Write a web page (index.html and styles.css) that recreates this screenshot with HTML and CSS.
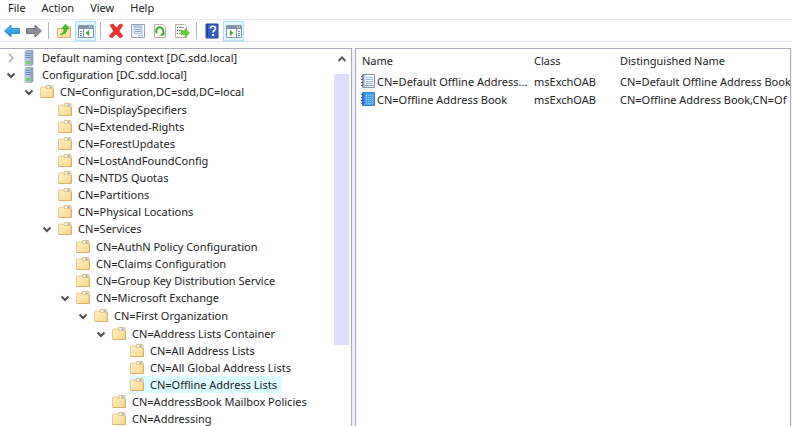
FILE: index.html
```
<!DOCTYPE html>
<html lang="en">
<head>
<meta charset="utf-8">
<title>ADSI Edit</title>
<link rel="stylesheet" href="styles.css">
</head>
<body>
<svg class="defs" aria-hidden="true">
  <defs>
    <linearGradient id="gold" x1="0" y1="0" x2="1" y2="1"><stop offset="0" stop-color="#fff0c2"/><stop offset="1" stop-color="#f7d98e"/></linearGradient>
    <linearGradient id="blue" x1="0" y1="0" x2="0" y2="1"><stop offset="0" stop-color="#5cc5fa"/><stop offset="1" stop-color="#1687dc"/></linearGradient>
  </defs>
  <symbol id="folder" viewBox="0 0 16 16">
    <path d="M7 2.500q0-1 1-1h5q1 0 1 1V5H7z" fill="#f3dda2" stroke="#d9b676" stroke-width=".8"/>
    <path d="M8.500 2.500H13V4H8.500z" fill="#fff"/><path d="M10.500 2.500h2v1.500h-2z" fill="#5aa7e0"/>
    <path d="M1.500 4q0-1 1-1h3.500l1.500 1.500h6.500v9H1.500z" fill="url(#gold)" stroke="#e3c180" stroke-width=".8"/>
    <path d="M2 13.500h12.500V5" fill="none" stroke="#d8b06a"/>
  </symbol>
  <symbol id="server" viewBox="0 0 16 16">
    <path d="M4 1.500L6 .5h6v14l-1.500 1H4z" fill="#93a6bc" stroke="#8493a8" stroke-width=".6"/>
    <path d="M4 1.500h5.500v14H4z" fill="#b3cae4"/>
    <path d="M4.500 3.500h5M4.500 5.500h5M4.500 7.500h5" stroke="#6289bb"/>
    <path d="M5 11h4v3H5z" fill="#6fd45a"/>
  </symbol>
  <symbol id="down" viewBox="0 0 12 12"><path d="M2.500 4.500L6 8l3.500-3.500" fill="none" stroke="#50504c" stroke-width="2"/></symbol>
  <symbol id="right" viewBox="0 0 12 12"><path d="M4 2l4 4-4 4" fill="none" stroke="#aaa" stroke-width="1.500"/></symbol>
</svg>

<nav class="menubar" aria-label="Menu">
  <button type="button">File</button><button type="button">Action</button><button type="button">View</button><button type="button">Help</button>
</nav>

<div class="toolbar" role="toolbar" aria-label="Tools">
  <button type="button" class="tool" aria-label="Back"><svg viewBox="0 0 16 16"><path d="M.5 8L7 2v3.500h8.500v5H7V14z" fill="url(#blue)" stroke="#348fc9"/></svg></button>
  <button type="button" class="tool" aria-label="Forward"><svg viewBox="0 0 16 16"><path d="M15.500 8L9 2v3.500H.5v5H9V14z" fill="#8e8e96" stroke="#707078"/></svg></button>
  <span class="divider"></span>
  <button type="button" class="tool" aria-label="Up one level"><svg viewBox="0 0 16 16"><path d="M1.500 5.500h7l1-2h5v11h-13z" fill="url(#gold)" stroke="#d5b878"/><path d="M4 11.500c3-1 4-3 4-5.500H5.500L9.500 1l4 5H11c0 4-3 6-7 5.500z" fill="#46bd2d" stroke="#389f29" stroke-width=".5"/></svg></button>
  <button type="button" class="tool active" aria-label="Show console tree"><svg viewBox="0 0 16 16"><path d="M.5 2.500h15v12H.5z" fill="#fff" stroke="#8995a9"/><path d="M1 3h14v3H1z" fill="#8392ab"/><path d="M11 4h1M13 4h1" stroke="#fff"/><path d="M5.500 6v8" stroke="#8995a9"/><path d="M2 8.500h2M2 10.500h2M2 12.500h2" stroke="#5980b8"/><path d="M11 7v6l-3.500-3z" fill="#37ad24"/></svg></button>
  <span class="divider"></span>
  <button type="button" class="tool" aria-label="Delete"><svg viewBox="0 0 16 16"><path d="M2 2l3-1 3.500 4L12 1l3 1-4 6 4 5-3 2-4-4-4 4-3-2 4.500-5z" fill="#ee322c" stroke="#cb2923" stroke-width=".6"/></svg></button>
  <button type="button" class="tool" aria-label="Properties"><svg viewBox="0 0 16 16"><path d="M1.500 1.500h13v13h-13z" fill="#f4f7fc" stroke="#97a1b8"/><path d="M4 4.500h8v6H4z" fill="#e0edf8" stroke="#91acc8" stroke-width=".7"/><path d="M3 3h9M5 6.500h6M5 8.500h6M8 12.500h2M11 12.500h2" stroke="#83a6ca"/></svg></button>
  <button type="button" class="tool" aria-label="Refresh"><svg viewBox="0 0 16 16"><path d="M2.500 1.500h9l2 2v11h-11z" fill="#fffef6" stroke="#bbb59f"/><path d="M5 10a3.500 3.500 0 1 1 6-1" fill="none" stroke="#3cae2c" stroke-width="2"/><path d="M12.500 7.500v5h-5z" fill="#3cae2c"/></svg></button>
  <button type="button" class="tool" aria-label="Export list"><svg viewBox="0 0 16 16"><path d="M1.500 1.500h9l2 2v11h-11z" fill="#fffef6" stroke="#bbb59f"/><path d="M3 4.500h1M3 7.500h1M3 10.500h1" stroke="#555"/><path d="M5 4.500h5M5 7.500h4M5 10.500h4" stroke="#8ca1b8"/><path d="M7 8h4V5.500L15.500 10 11 14v-2.500H7z" fill="#60d12a" stroke="#43ac25" stroke-width=".5"/></svg></button>
  <span class="divider"></span>
  <button type="button" class="tool" aria-label="Help"><svg viewBox="0 0 16 16"><path d="M2 1h12v14H2z" fill="#365fc7" stroke="#24459b"/><path d="M3.500 1v14" stroke="#233f91"/><path d="M6.500 5.500c0-3 5-3 5 0 0 2-2.500 2-2.500 4" fill="none" stroke="#fff" stroke-width="1.700"/><path d="M8 11h2v2H8z" fill="#fff"/></svg></button>
  <button type="button" class="tool active" aria-label="Show action pane"><svg viewBox="0 0 16 16"><path d="M.5 2.500h15v12H.5z" fill="#fff" stroke="#8995a9"/><path d="M1 3h14v3H1z" fill="#8392ab"/><path d="M11 4h1M13 4h1" stroke="#fff"/><path d="M10.500 6v8" stroke="#8995a9"/><path d="M12 8.500h2M12 10.500h2M12 12.500h2" stroke="#5980b8"/><path d="M4 7v6l3.500-3z" fill="#37ad24"/></svg></button>
</div>

<main class="panes">
  <section class="pane tree-pane" aria-label="Console tree">
    <ul class="tree">
      <li><div class="node"><button type="button" class="toggle" aria-label="Expand"><svg><use href="#right"/></svg></button><svg class="icon"><use href="#server"/></svg><span>Default naming context [DC.sdd.local]</span></div></li>
      <li><div class="node"><button type="button" class="toggle" aria-label="Collapse"><svg><use href="#down"/></svg></button><svg class="icon"><use href="#server"/></svg><span>Configuration [DC.sdd.local]</span></div>
        <ul class="branch">
          <li><div class="node"><button type="button" class="toggle" aria-label="Collapse"><svg><use href="#down"/></svg></button><svg class="icon"><use href="#folder"/></svg><span>CN=Configuration,DC=sdd,DC=local</span></div>
            <ul class="branch">
              <li><div class="node leaf"><svg class="icon"><use href="#folder"/></svg><span>CN=DisplaySpecifiers</span></div></li>
              <li><div class="node leaf"><svg class="icon"><use href="#folder"/></svg><span>CN=Extended-Rights</span></div></li>
              <li><div class="node leaf"><svg class="icon"><use href="#folder"/></svg><span>CN=ForestUpdates</span></div></li>
              <li><div class="node leaf"><svg class="icon"><use href="#folder"/></svg><span>CN=LostAndFoundConfig</span></div></li>
              <li><div class="node leaf"><svg class="icon"><use href="#folder"/></svg><span>CN=NTDS Quotas</span></div></li>
              <li><div class="node leaf"><svg class="icon"><use href="#folder"/></svg><span>CN=Partitions</span></div></li>
              <li><div class="node leaf"><svg class="icon"><use href="#folder"/></svg><span>CN=Physical Locations</span></div></li>
              <li><div class="node"><button type="button" class="toggle" aria-label="Collapse"><svg><use href="#down"/></svg></button><svg class="icon"><use href="#folder"/></svg><span>CN=Services</span></div>
                <ul class="branch">
                  <li><div class="node leaf"><svg class="icon"><use href="#folder"/></svg><span>CN=AuthN Policy Configuration</span></div></li>
                  <li><div class="node leaf"><svg class="icon"><use href="#folder"/></svg><span>CN=Claims Configuration</span></div></li>
                  <li><div class="node leaf"><svg class="icon"><use href="#folder"/></svg><span>CN=Group Key Distribution Service</span></div></li>
                  <li><div class="node"><button type="button" class="toggle" aria-label="Collapse"><svg><use href="#down"/></svg></button><svg class="icon"><use href="#folder"/></svg><span>CN=Microsoft Exchange</span></div>
                    <ul class="branch">
                      <li><div class="node"><button type="button" class="toggle" aria-label="Collapse"><svg><use href="#down"/></svg></button><svg class="icon"><use href="#folder"/></svg><span>CN=First Organization</span></div>
                        <ul class="branch">
                          <li><div class="node"><button type="button" class="toggle" aria-label="Collapse"><svg><use href="#down"/></svg></button><svg class="icon"><use href="#folder"/></svg><span>CN=Address Lists Container</span></div>
                            <ul class="branch last">
                              <li><div class="node leaf"><svg class="icon"><use href="#folder"/></svg><span>CN=All Address Lists</span></div></li>
                              <li><div class="node leaf"><svg class="icon"><use href="#folder"/></svg><span>CN=All Global Address Lists</span></div></li>
                              <li><div class="node leaf selected"><svg class="icon"><use href="#folder"/></svg><span>CN=Offline Address Lists</span></div></li>
                            </ul>
                          </li>
                          <li><div class="node leaf"><svg class="icon"><use href="#folder"/></svg><span>CN=AddressBook Mailbox Policies</span></div></li>
                          <li><div class="node leaf"><svg class="icon"><use href="#folder"/></svg><span>CN=Addressing</span></div></li>
                        </ul>
                      </li>
                    </ul>
                  </li>
                </ul>
              </li>
            </ul>
          </li>
        </ul>
      </li>
    </ul>
    <div class="scrollbar">
      <button type="button" class="scroll-up" aria-label="Scroll up"><svg viewBox="0 0 12 12"><path d="M2.500 8L6 4.500 9.500 8" fill="none" stroke="#5c5c4c" stroke-width="2"/></svg></button>
      <div class="thumb"></div>
    </div>
  </section>
  <section class="pane list-pane" aria-label="Objects">
    <table class="list">
      <colgroup><col class="col-name"><col class="col-class"><col></colgroup>
      <thead><tr><th>Name</th><th>Class</th><th>Distinguished Name</th></tr></thead>
      <tbody>
        <tr><td><div class="name"><svg class="book" viewBox="0 0 14 14"><path d="M1.500.5h12v13h-12z" fill="#f6f9ff" stroke="#8292c0"/><path d="M1 1h2.500v12H1z" fill="#9292b8"/><path d="M5 3.500h7M5 5.500h7M5 7.500h7M5 9.500h7" stroke="#98b8f0"/><path d="M4 11.500h9" stroke="#8cae98"/><path d="M0 2.500h2M0 5.500h2M0 8.500h2M0 11.500h2" stroke="#68688c"/></svg><span>CN=Default Offline Address...</span></div></td><td>msExchOAB</td><td>CN=Default Offline Address Book</td></tr>
        <tr><td><div class="name"><svg class="book" viewBox="0 0 14 14"><path d="M1.500.5h12v13h-12z" fill="#4ba5f3" stroke="#2f83cf"/><path d="M1 1h2.500v12H1z" fill="#3078c4"/><path d="M5 3.500h7M5 5.500h7M5 7.500h7M5 9.500h7M5 11.500h7" stroke="#8dcbff" stroke-dasharray="1 1"/><path d="M0 2.500h2M0 5.500h2M0 8.500h2M0 11.500h2" stroke="#315f95"/></svg><span>CN=Offline Address Book</span></div></td><td>msExchOAB</td><td>CN=Offline Address Book,CN=Of</td></tr>
      </tbody>
    </table>
  </section>
</main>
</body>
</html>
```
FILE: styles.css
```
* { box-sizing: border-box; }

body {
  margin: 0;
  height: 100vh;
  display: flex;
  flex-direction: column;
  overflow: hidden;
  background: #fff;
  color: #222;
  font: 11px/17px "Noto Sans", "Open Sans", sans-serif;
}

button {
  margin: 0;
  padding: 0;
  border: 0;
  background: none;
  color: inherit;
  font: inherit;
}

ul {
  margin: 0;
  padding: 0;
  list-style: none;
}

svg { display: block; flex: none; }

.defs { position: absolute; width: 0; height: 0; }

.menubar {
  display: flex;
  gap: 16px;
  height: 20px;
  padding: 0 8px;
  border-bottom: 1px solid #e9e9ee;
  line-height: 16px;
}

.menubar button { height: 16px; }

.toolbar {
  display: flex;
  align-items: center;
  gap: 1px;
  height: 22px;
  padding-left: 1px;
  border-bottom: 1px solid #dcdcf2;
}

.tool {
  display: grid;
  place-items: center;
  width: 21px;
  height: 20px;
  border: 1px solid transparent;
}

.tool svg { width: 16px; height: 16px; }

.active {
  background: #e2f8ff;
  border-color: #a9e3f5;
}

.divider {
  width: 1px;
  height: 17px;
  margin: 0 3px;
  background: #b4b4c4;
}

.panes {
  flex: 1;
  min-height: 0;
  display: grid;
  grid-template-columns: 352px 1fr;
  gap: 3px;
  margin-top: 6px;
  padding-right: 1px;
  background: #f0f0fa;
}

.pane {
  min-width: 0;
  overflow: hidden;
  background: #fff;
  border-top: 1px solid #aaaabc;
  border-right: 1px solid #aaaabc;
}

.tree-pane { display: flex; }

.tree {
  flex: 1;
  min-width: 0;
}

.tree li { padding-left: 5px; }
.branch { padding-left: 13px; }
.branch .branch { padding-top: 1px; }
.branch .branch.last { padding-top: 0; }

.node {
  display: flex;
  align-items: center;
  width: max-content;
  height: 17px;
  padding-right: 5px;
  white-space: nowrap;
}

.leaf { margin-left: 16px; }
.selected { background: #dcfcff; }

.toggle { width: 12px; height: 12px; margin-right: 4px; }
.toggle svg { width: 12px; height: 12px; }
.icon { width: 16px; height: 16px; margin-right: 5px; }

.scrollbar {
  width: 17px;
  padding-right: 2px;
}

.scroll-up {
  display: grid;
  place-items: center;
  width: 100%;
  height: 25px;
  padding-bottom: 6px;
}

.scroll-up svg { width: 12px; height: 12px; }

.thumb {
  height: 72%;
  background: #dedefc;
}

.list-pane { border-left: 1px solid #aaaabc; }

.list {
  width: 100%;
  table-layout: fixed;
  border-collapse: collapse;
}

.col-name { width: 178px; }
.col-class { width: 86px; }

.list th,
.list td {
  height: 18px;
  padding: 0;
  overflow: hidden;
  font-weight: 400;
  text-align: left;
  white-space: nowrap;
}

.list th { height: 23px; }
.list th:first-child { padding-left: 6px; }
.list td:first-child { padding-left: 5px; }

.name { display: flex; align-items: center; gap: 2px; }
.book { width: 14px; height: 14px; }
```
